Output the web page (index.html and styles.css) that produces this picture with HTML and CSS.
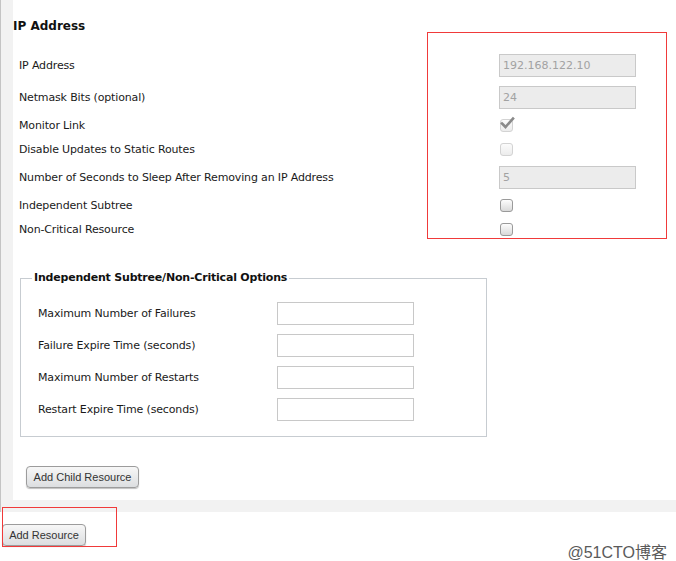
FILE: index.html
```html
<!DOCTYPE html>
<html>
<head>
<meta charset="utf-8">
<link rel="stylesheet" href="styles.css">
</head>
<body>
<div class="page">
  <div class="panel-wrap">
    <div class="panel">
      <h2 class="title">IP Address</h2>
      <div class="form">
        <div class="row row-input">
          <span class="label">IP Address</span>
          <span class="field field-disabled">192.168.122.10</span>
        </div>
        <div class="row row-input">
          <span class="label">Netmask Bits (optional)</span>
          <span class="field field-disabled">24</span>
        </div>
        <div class="row row-check">
          <span class="label">Monitor Link</span>
          <span class="cb cb-disabled cb-checked">
            <svg width="20" height="16" viewBox="0 0 20 16"><path d="M3 7.5 L6.5 11 L14 2.5" fill="none" stroke="#8a8a8a" stroke-width="2.6" stroke-linecap="square"/></svg>
          </span>
        </div>
        <div class="row row-check">
          <span class="label">Disable Updates to Static Routes</span>
          <span class="cb cb-disabled"></span>
        </div>
        <div class="row row-input">
          <span class="label">Number of Seconds to Sleep After Removing an IP Address</span>
          <span class="field field-disabled">5</span>
        </div>
        <div class="row row-check">
          <span class="label">Independent Subtree</span>
          <span class="cb cb-enabled"></span>
        </div>
        <div class="row row-check">
          <span class="label">Non-Critical Resource</span>
          <span class="cb cb-enabled"></span>
        </div>
      </div>

      <fieldset class="options">
        <legend class="legend">Independent Subtree/Non-Critical Options</legend>
        <div class="opt-row">
          <span class="label">Maximum Number of Failures</span>
          <span class="field field-empty"></span>
        </div>
        <div class="opt-row">
          <span class="label">Failure Expire Time (seconds)</span>
          <span class="field field-empty"></span>
        </div>
        <div class="opt-row">
          <span class="label">Maximum Number of Restarts</span>
          <span class="field field-empty"></span>
        </div>
        <div class="opt-row">
          <span class="label">Restart Expire Time (seconds)</span>
          <span class="field field-empty"></span>
        </div>
      </fieldset>

      <button class="btn btn-child">Add Child Resource</button>
    </div>
  </div>

  <div class="footer">
    <button class="btn btn-add">Add Resource</button>
    <span class="watermark">@51CTO博客</span>
  </div>

  <div class="annot annot-fields"></div>
  <div class="annot annot-add"></div>
</div>
</body>
</html>
```

FILE: styles.css
```css
html, body {
  margin: 0;
  padding: 0;
  background: #ffffff;
}

body {
  font-family: "DejaVu Sans", Verdana, sans-serif;
  font-size: 11px;
  color: #1a1a1a;
}

.page {
  position: relative;
  width: 676px;
  height: 561px;
  overflow: hidden;
}

.panel-wrap {
  border-left: 1px solid #c4c4c4;
  background: #f2f2f2;
  padding: 0 0 12px 12px;
}

.panel {
  background: #ffffff;
  padding: 18px 0 12px 0;
  height: 470px;
  box-sizing: content-box;
}

.title {
  margin: 0 0 15px 0;
  font-size: 12px;
  line-height: 16px;
  font-weight: bold;
  color: #111;
}

.form {
  display: flex;
  flex-direction: column;
}

.row {
  display: grid;
  grid-template-columns: 480px 137px;
  align-items: center;
  padding-left: 6px;
}

.row-input { height: 32px; }
.row-check { height: 24px; }

.label {
  line-height: 14px;
  padding-top: 2px;
  white-space: nowrap;
  letter-spacing: -0.15px;
  color: #1a1a1a;
}

.field {
  display: block;
  box-sizing: border-box;
  height: 23px;
  line-height: 21px;
  padding-left: 3px;
  border: 1px solid #c9c9c9;
}

.field-disabled {
  width: 137px;
  background: #ececec;
  color: #a2a2a2;
}

.field-empty {
  width: 137px;
  background: #ffffff;
  border-color: #c8c8c8;
}

.cb {
  display: block;
  position: relative;
  box-sizing: border-box;
  width: 13px;
  height: 13px;
  margin-left: 1px;
  border-radius: 3px;
}

.cb-disabled {
  border: 1px solid #d3d3d3;
  background: linear-gradient(#fbfbfb, #ececec);
}

.cb-enabled {
  border: 1px solid #9a9a9a;
  background: linear-gradient(#fdfdfd, #d9d9d9);
}

.cb-checked svg {
  position: absolute;
  left: -2px;
  top: -4px;
}

.options {
  margin: 30px 0 0 7px;
  width: 467px;
  box-sizing: border-box;
  border: 1px solid #c7ccd1;
  padding: 12px 0 11px 0;
}

.legend {
  margin-left: 11px;
  padding: 0 2px;
  font-weight: bold;
  font-size: 11px;
  line-height: 14px;
  letter-spacing: -0.2px;
  color: #111;
}

.opt-row {
  display: grid;
  grid-template-columns: 239px 137px;
  align-items: center;
  height: 32px;
  padding-left: 17px;
}

.btn {
  display: block;
  font-family: "Liberation Sans", Arial, sans-serif;
  font-size: 11px;
  color: #333;
  border: 1px solid #9c9c9c;
  border-radius: 4px;
  background: linear-gradient(#f7f7f7, #dcdee0);
  box-shadow: 0 1px 1px rgba(0,0,0,0.25);
  height: 22px;
  padding: 0;
  cursor: pointer;
}

.btn-child {
  margin: 29px 0 0 13px;
  width: 113px;
}

.footer {
  display: flex;
  justify-content: space-between;
  align-items: flex-start;
  padding: 12px 9px 0 2px;
}

.btn-add {
  width: 84px;
}

.watermark {
  margin-top: 19px;
  font-family: "Liberation Sans", "Noto Sans CJK SC", sans-serif;
  font-size: 16px;
  line-height: 20px;
  color: #5a5a5a;
}

.annot {
  position: absolute;
  border: 1px solid #f03a3a;
  box-sizing: border-box;
}

.annot-fields {
  left: 427px;
  top: 32px;
  width: 240px;
  height: 207px;
}

.annot-add {
  left: 2px;
  top: 507px;
  width: 115px;
  height: 40px;
}
```
